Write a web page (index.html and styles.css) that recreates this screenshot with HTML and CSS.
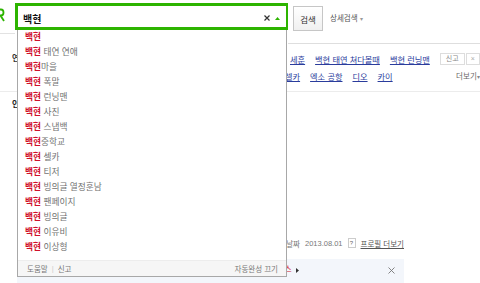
FILE: index.html
```html
<!DOCTYPE html>
<html lang="ko">
<head>
<meta charset="utf-8">
<title>백현 : 검색</title>
<link rel="stylesheet" href="styles.css">
</head>
<body>
<div class="page">
  <header class="header">
    <div class="logo-stub">
      <svg class="logo-tail" width="6" height="16" viewBox="0 0 6 16"><path d="M0 1.5 H2 Q4.5 1.5 4.5 4.5 Q4.5 7.5 2 7.5 H0 M1.5 7.5 L5 13" fill="none" stroke="#2db400" stroke-width="1.8"/></svg>
    </div>
    <div class="search">
      <div class="search-box">
        <span class="query">백현</span>
        <svg class="clear" width="6" height="6" viewBox="0 0 6 6"><path d="M0.5 0.5 L5.5 5.5 M5.5 0.5 L0.5 5.5" stroke="#333" stroke-width="1.2"/></svg>
        <svg class="toggle" width="5" height="3" viewBox="0 0 5 3"><polygon points="2.5,0 5,3 0,3" fill="#2db400"/></svg>
      </div>
      <div class="suggest">
        <ul class="suggest-list">
          <li><b>백현</b></li>
          <li><b>백현</b> 태연 연애</li>
          <li><b>백현</b>마을</li>
          <li><b>백현</b> 폭말</li>
          <li><b>백현</b> 런닝맨</li>
          <li><b>백현</b> 사진</li>
          <li><b>백현</b> 스냅백</li>
          <li><b>백현</b>중학교</li>
          <li><b>백현</b> 셀카</li>
          <li><b>백현</b> 티저</li>
          <li><b>백현</b> 빙의글 열정훈남</li>
          <li><b>백현</b> 팬페이지</li>
          <li><b>백현</b> 빙의글</li>
          <li><b>백현</b> 이유비</li>
          <li><b>백현</b> 이상형</li>
        </ul>
        <div class="suggest-foot">
          <span>도움말</span><span class="sep">|</span><span>신고</span>
          <span class="off">자동완성 끄기</span>
        </div>
      </div>
    </div>
    <div class="header-tools">
      <button class="btn-search" type="button">검색</button>
      <span class="detail">상세검색 <i>▾</i></span>
    </div>
  </header>
  <div class="content">
    <div class="side"><span class="side-bar"></span></div>
    <main class="main">
      <section class="related">
        <div class="rel-label">연관</div>
        <div class="rel-body">
          <div class="rel-row first">
            <a href="#">세훈</a>
            <a href="#">백현 태연 쳐다볼때</a>
            <a href="#">백현 런닝맨</a>
            <span class="rel-report"><span class="box">신고</span><span class="box x">×</span></span>
          </div>
          <div class="rel-row second">
            <a href="#">셀카</a>
            <a href="#">엑소 공항</a>
            <a href="#">디오</a>
            <a href="#">카이</a>
            <span class="more">더보기<i>▾</i></span>
          </div>
        </div>
      </section>
      <h2 class="section-title">인물</h2>
      <div class="profile">
        <div class="profile-body"></div>
        <div class="meta">
          <span>날짜</span>
          <span>2013.08.01</span>
          <span class="q">?</span>
          <a href="#" class="more-profile">프로필 더보기</a>
        </div>
        <div class="notice">
          <span class="notice-text">뉴스</span>
          <svg class="arrow" width="3" height="5" viewBox="0 0 3 5"><polygon points="0,0 3,2.5 0,5" fill="#333"/></svg>
          <svg class="close" width="7" height="7" viewBox="0 0 7 7"><path d="M0.5 0.5 L6.5 6.5 M6.5 0.5 L0.5 6.5" stroke="#777" stroke-width="0.9"/></svg>
        </div>
      </div>
    </main>
  </div>
</div>
</body>
</html>
```
FILE: styles.css
```css
html, body {
  margin: 0;
  padding: 0;
  background: #fff;
}
body {
  font-family: "Liberation Sans", "Noto Sans CJK KR", sans-serif;
  color: #333;
}
.page {
  width: 480px;
  height: 283px;
  overflow: hidden;
}

/* header */
.header {
  display: flex;
  height: 44px;
}
.logo-stub {
  width: 15px;
  height: 33px;
  border-bottom: 1px solid #e2e2e2;
}
.logo-tail {
  display: block;
  margin: 8px 0 0 -1px;
}
.search {
  width: 273px;
  position: relative;
  padding-top: 3px;
  box-sizing: border-box;
}
.search-box {
  height: 27px;
  box-sizing: border-box;
  border: 3px solid #2db400;
  border-right-width: 2px;
  display: flex;
  align-items: center;
  padding: 3px 6px 0 5px;
}
.query {
  flex: 1;
  font-size: 10px;
  font-weight: bold;
  color: #111;
}
.clear {
  display: block;
  margin-right: 5px;
}
.toggle {
  display: block;
}

/* suggestion dropdown */
.suggest {
  position: absolute;
  left: 2px;
  top: 30px;
  width: 270px;
  box-sizing: border-box;
  border: 1px solid #a8a8a8;
  border-top: 0;
  background: #fff;
  z-index: 5;
}
.suggest-list {
  list-style: none;
  margin: 0;
  padding: 0 0 5px;
}
.suggest-list li {
  height: 15px;
  line-height: 15px;
  font-size: 8.7px;
  padding-left: 7px;
  color: #707070;
  white-space: nowrap;
}
.suggest-list b {
  color: #d0102a;
  font-weight: bold;
}
.suggest-foot {
  height: 16px;
  box-sizing: border-box;
  background: #f6f6f6;
  border-top: 1px solid #ededed;
  display: flex;
  align-items: center;
  padding: 0 8px 0 9px;
  font-size: 7.5px;
  color: #777;
}
.sep {
  margin: 0 4px;
  color: #ccc;
}
.off {
  margin-left: auto;
}

.header-tools {
  flex: 1;
  height: 43px;
  border-bottom: 1px solid #dedede;
  display: flex;
  align-items: flex-start;
}
.btn-search {
  margin: 6px 0 0 5px;
  width: 30px;
  height: 25px;
  padding: 0;
  border: 1px solid #c6c6c6;
  background: linear-gradient(#ffffff, #f0f0f0);
  font-family: "Liberation Sans", "Noto Sans CJK KR", sans-serif;
  font-size: 8.5px;
  color: #333;
}
.detail {
  margin: 14px 0 0 7px;
  font-size: 7.5px;
  line-height: 10px;
  color: #555;
}
.detail i {
  font-style: normal;
  color: #999;
  font-size: 6px;
}

/* content */
.content {
  display: flex;
}
.side {
  width: 3px;
}
.side-bar {
  display: block;
  margin-top: 28px;
  height: 90px;
  background: #2db400;
}
.main {
  flex: 1;
}
.related {
  height: 48px;
  box-sizing: border-box;
  border-bottom: 1px solid #ececec;
  display: flex;
  padding: 6px 7px 0 12px;
}
.rel-label {
  width: 20px;
  flex: none;
  font-size: 8px;
  font-weight: bold;
  color: #333;
  line-height: 17px;
  white-space: nowrap;
  overflow: hidden;
}
.rel-body {
  flex: 1;
}
.rel-row {
  display: flex;
  align-items: center;
  height: 17px;
  gap: 10px;
  font-size: 8.2px;
  white-space: nowrap;
}
.rel-row a {
  color: #2a3c9c;
  text-decoration: underline;
}
.rel-row.first {
  padding-left: 258px;
}
.rel-row.second {
  padding-left: 253px;
}
.rel-report {
  margin-left: auto;
  display: flex;
  gap: 1px;
}
.rel-report .box {
  height: 10px;
  line-height: 10px;
  border: 1px solid #dddddd;
  padding: 0 5px;
  font-size: 7px;
  color: #888;
}
.rel-report .box.x {
  color: #aaa;
  padding: 0 4px;
}
.more {
  margin-left: auto;
  font-size: 7.5px;
  color: #666;
}
.more i {
  font-style: normal;
  font-size: 6px;
  color: #888;
}
.section-title {
  margin: 0;
  padding: 8px 0 0 12px;
  font-size: 8px;
  line-height: 10px;
  font-weight: bold;
  color: #222;
}
.profile {
  margin-left: 17px;
  width: 387px;
}
.profile-body {
  height: 127px;
}
.meta {
  display: flex;
  justify-content: flex-end;
  align-items: center;
  height: 12px;
  gap: 5px;
  font-size: 7.5px;
  color: #777;
  white-space: nowrap;
}
.meta .q {
  width: 6px;
  height: 8px;
  line-height: 8px;
  border: 1px solid #cccccc;
  text-align: center;
  font-size: 6px;
  color: #666;
}
.more-profile {
  color: #555;
  text-decoration: underline;
}
.notice {
  margin-top: 10px;
  height: 30px;
  box-sizing: border-box;
  background: #f3f6fb;
  display: flex;
  align-items: flex-start;
  padding: 5px 9px 0 260px;
}
.notice-text {
  font-size: 8px;
  line-height: 12px;
  color: #d0102a;
  white-space: nowrap;
}
.arrow {
  display: block;
  margin: 4px 0 0 4px;
}
.close {
  display: block;
  margin: 3px 0 0 auto;
}
```
